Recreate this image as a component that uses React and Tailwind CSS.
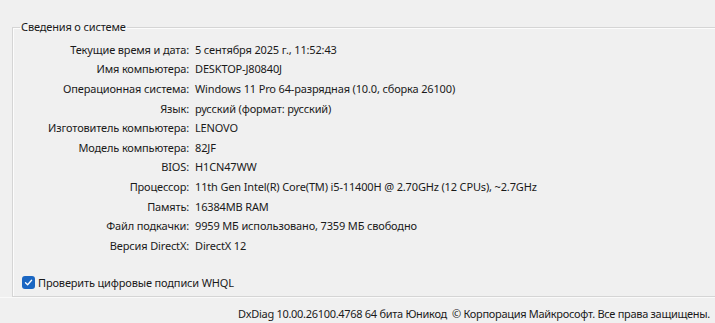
import React from "react";

const rows = [
  ["Текущие время и дата:", "5 сентября 2025 г., 11:52:43"],
  ["Имя компьютера:", "DESKTOP-J80840J"],
  ["Операционная система:", "Windows 11 Pro 64-разрядная (10.0, сборка 26100)"],
  ["Язык:", "русский (формат: русский)"],
  ["Изготовитель компьютера:", "LENOVO"],
  ["Модель компьютера:", "82JF"],
  ["BIOS:", "H1CN47WW"],
  ["Процессор:", "11th Gen Intel(R) Core(TM) i5-11400H @ 2.70GHz (12 CPUs), ~2.7GHz"],
  ["Память:", "16384MB RAM"],
  ["Файл подкачки:", "9959 МБ использовано, 7359 МБ свободно"],
  ["Версия DirectX:", "DirectX 12"],
];

const App = () => {
  return (
    <div
      className="w-[715px] h-[323px] overflow-hidden bg-[#f0f0f0] text-[#1a1a1a] text-[11px] tracking-[-0.15px] flex flex-col"
      style={{ fontFamily: '"Noto Sans", "Liberation Sans", sans-serif' }}
    >
      <fieldset className="ml-[12px] mr-[-10px] mt-[19px] h-[278px] border border-[#d5d5d5] border-r-0 p-0 shadow-[inset_1px_1px_0_#fcfcfc]">
        <legend className="ml-[7px] px-[1px] leading-[16px]">Сведения о системе</legend>

        <div className="mt-[5px] flex flex-col">
          {rows.map(([label, value]) => (
            <div key={label} className="grid grid-cols-[176px_1fr] gap-x-[6px] h-[19.6px] items-center leading-[16px]">
              <span className="text-right whitespace-nowrap">{label}</span>
              <span className="whitespace-nowrap">{value}</span>
            </div>
          ))}
        </div>

        <label className="mt-[19px] ml-[9px] flex items-center gap-[3px] leading-[16px]">
          <span className="w-[13px] h-[13px] rounded-[3px] bg-[#1a66c2] flex items-center justify-center">
            <svg width="9" height="9" viewBox="0 0 9 9" fill="none">
              <path d="M1.5 4.8 L3.6 6.8 L7.6 2.2" stroke="white" strokeWidth="1.3" strokeLinecap="round" strokeLinejoin="round" />
            </svg>
          </span>
          <span>Проверить цифровые подписи WHQL</span>
        </label>
      </fieldset>

      <div className="flex-1 flex items-center justify-end pr-[5px] border-t border-[#fafafa]">
        <span className="whitespace-nowrap leading-[16px] mt-[6px] tracking-[-0.3px]">
          DxDiag 10.00.26100.4768 64 бита Юникод&nbsp; © Корпорация Майкрософт. Все права защищены.
        </span>
      </div>
    </div>
  );
};

export default App;
